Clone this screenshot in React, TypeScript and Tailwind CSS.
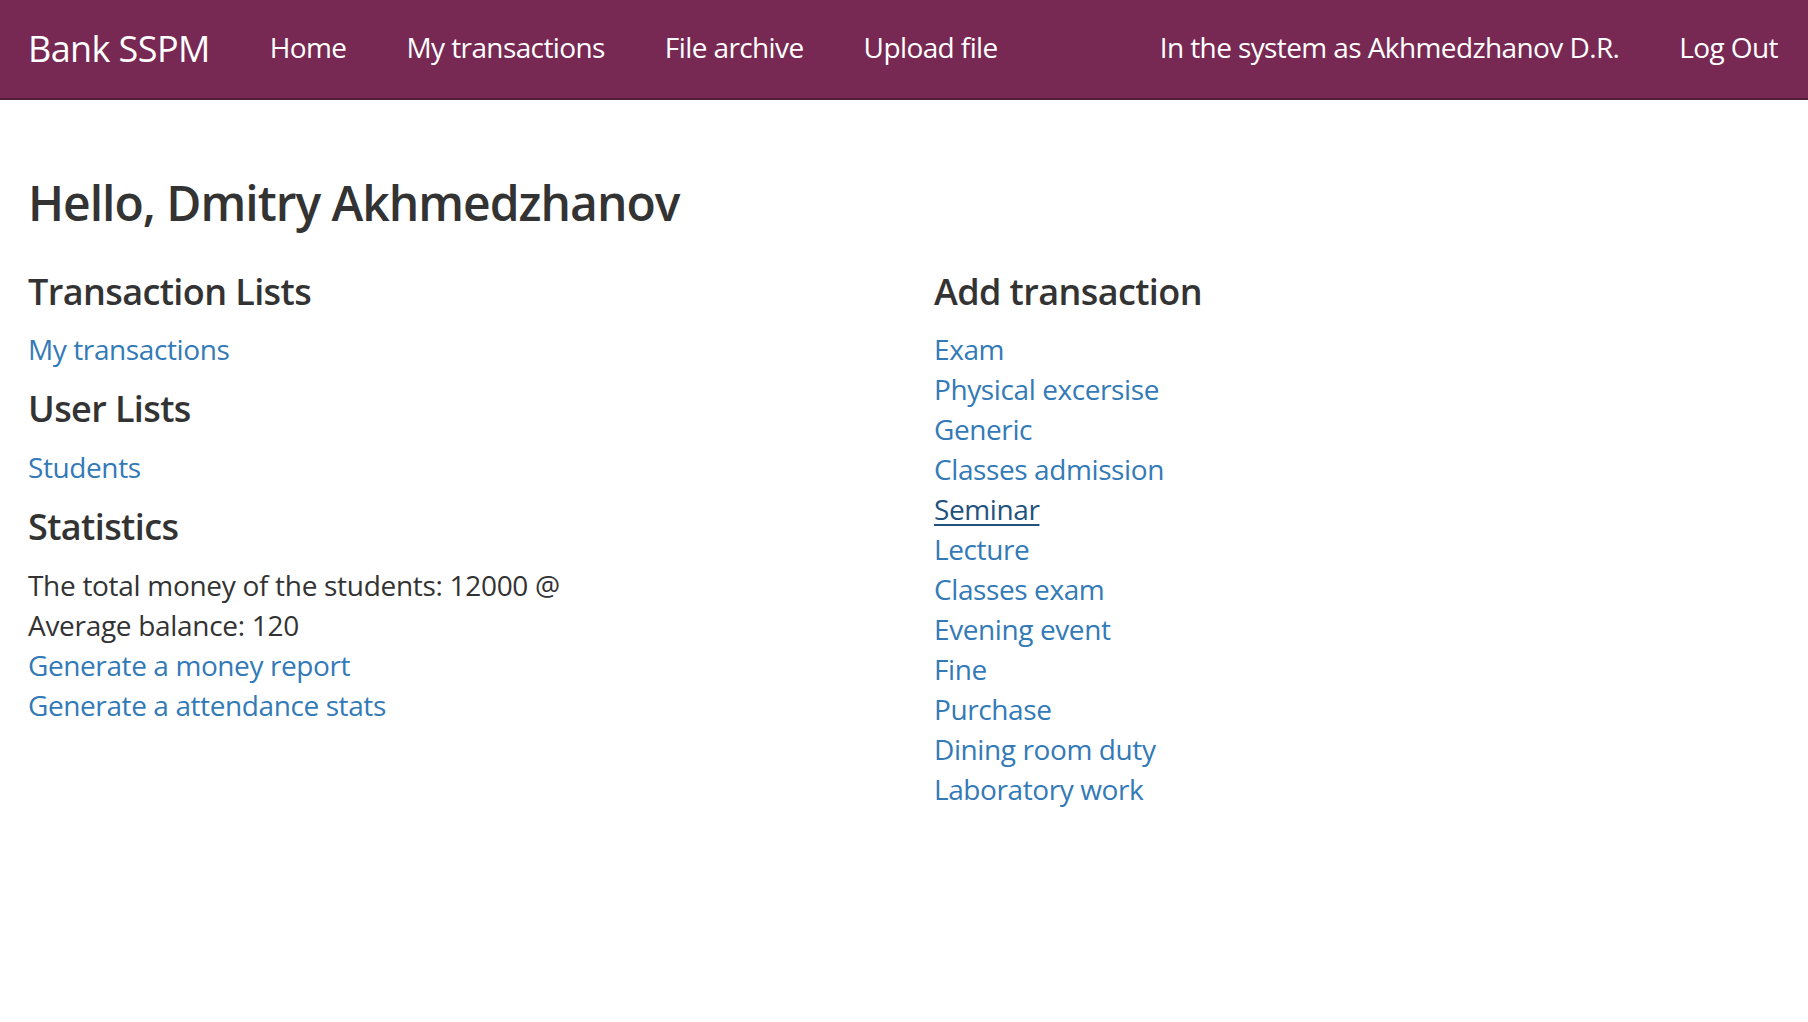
import React from "react";

const FONT = "font-['Open_Sans',sans-serif]";

function NavLink({ children }: { children: React.ReactNode }) {
  return (
    <a href="#" className="block px-[30px] pt-[27px] pb-[33px] text-[28px] leading-[40px] text-white tracking-[-0.6px]">
      {children}
    </a>
  );
}

function Link({ children, active }: { children: React.ReactNode; active?: boolean }) {
  return (
    <div className="text-[28px] leading-[40px] tracking-[-0.4px]">
      <a
        href="#"
        className={
          active
            ? "text-[#23527c] underline decoration-2 underline-offset-[4px]"
            : "text-[#337ab7]"
        }
      >
        {children}
      </a>
    </div>
  );
}

function H4({ children }: { children: React.ReactNode }) {
  return (
    <h4 className="mt-[20px] mb-[18px] text-[36px] leading-[39.6px] font-semibold text-[#333333] tracking-[-0.6px]">
      {children}
    </h4>
  );
}

export default function App() {
  const add = [
    "Exam",
    "Physical excersise",
    "Generic",
    "Classes admission",
    "Seminar",
    "Lecture",
    "Classes exam",
    "Evening event",
    "Fine",
    "Purchase",
    "Dining room duty",
    "Laboratory work",
  ];
  return (
    <div className={`${FONT} min-h-[1022px] bg-white text-[#333333]`}>
      <nav className="h-[100px] bg-[#772953] border-b-2 border-[#511c39] flex items-start">
        <a href="#" className="block pl-[28px] pr-[30px] pt-[29px] pb-[31px] text-[36px] leading-[40px] text-white tracking-[-0.6px]">
          Bank SSPM
        </a>
        <NavLink>Home</NavLink>
        <NavLink>My transactions</NavLink>
        <NavLink>File archive</NavLink>
        <NavLink>Upload file</NavLink>
        <div className="ml-auto flex items-start">
          <span className="block mx-[30px] pt-[27px] pb-[33px] text-[28px] leading-[40px] text-white tracking-[-0.6px]">
            In the system as Akhmedzhanov D.R.
          </span>
          <NavLink>Log Out</NavLink>
        </div>
      </nav>
      <main className="px-[28px] pt-[77px]">
        <h3 className="mb-[20px] text-[48px] leading-[52.8px] font-semibold text-[#333333] tracking-[-1px]">
          Hello, Dmitry Akhmedzhanov
        </h3>
        <div className="grid grid-cols-2 gap-x-[60px] pt-[2px]">
          <div>
            <H4>Transaction Lists</H4>
            <div className="mb-[20px]">
              <Link>My transactions</Link>
            </div>
            <H4>User Lists</H4>
            <div className="mb-[20px]">
              <Link>Students</Link>
            </div>
            <H4>Statistics</H4>
            <div className="text-[28px] leading-[40px] tracking-[-0.3px]">
              <div>The total money of the students: 12000 @</div>
              <div>Average balance: 120</div>
            </div>
            <Link>Generate a money report</Link>
            <Link>Generate a attendance stats</Link>
          </div>
          <div>
            <H4>Add transaction</H4>
            {add.map((t) => (
              <Link key={t} active={t === "Seminar"}>
                {t}
              </Link>
            ))}
          </div>
        </div>
      </main>
    </div>
  );
}
